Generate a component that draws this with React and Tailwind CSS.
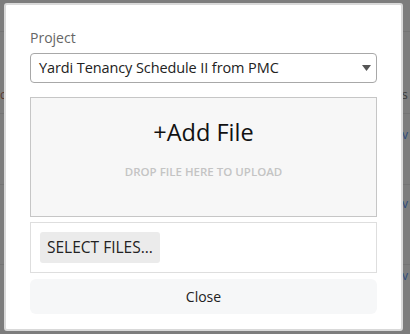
import React from 'react';

const App = () => {
  return (
    <div className="relative w-[410px] h-[334px] overflow-hidden bg-[#7d7d7d]" style={{ fontFamily: '"Open Sans", "Noto Sans", sans-serif' }}>
      {/* faded page behind the dialog */}
      <div className="flex flex-col">
        <div className="h-[32px] border-b border-[#747474]" />
        <div className="h-[82px] border-b border-[#747474] relative">
          <span className="absolute left-[0px] top-[54px] text-[12px] text-[#5a3a30]">c</span>
          <span className="absolute left-[402px] top-[54px] text-[12px] text-[#3a3a3a]">s</span>
        </div>
        <div className="h-[71px] border-b border-[#747474] relative">
          <span className="absolute left-[402px] top-[12px] text-[12px] text-[#2c4a7a]">v</span>
        </div>
        <div className="h-[80px] border-b border-[#747474] relative">
          <span className="absolute left-[402px] top-[10px] text-[12px] text-[#2c4a7a]">v</span>
        </div>
        <div className="h-[60px] relative">
          <span className="absolute left-[402px] top-[2px] text-[12px] text-[#2c4a7a]">v</span>
        </div>
      </div>

      {/* dialog */}
      <div className="absolute left-[4px] top-[3px] w-[399px] h-[328px] bg-white rounded-[3px] border-2 border-[#d9d9d9] px-[24px] pt-[23px]">
        <div className="text-[14px] text-[#666] leading-[20px]">Project</div>
        <div className="mt-[5px] h-[30px] border border-[#a8a8a8] rounded-[4px] flex items-center justify-between pl-[8px] pr-[5px]">
          <span className="text-[14.5px] text-[#222] tracking-[-0.1px]">Yardi Tenancy Schedule II from PMC</span>
          <svg width="9" height="6" viewBox="0 0 9 6"><path d="M0 0h9L4.5 6z" fill="#555" /></svg>
        </div>
        <div className="mt-[14px] h-[120px] border border-[#c6c6c6] bg-[#f7f7f7] flex flex-col items-center">
          <div className="mt-[18px] text-[23.5px] text-[#111] leading-[32px]">+Add File</div>
          <div className="mt-[16px] text-[11.5px] font-semibold text-[#c4c4c4] leading-[16px]">DROP FILE HERE TO UPLOAD</div>
        </div>
        <div className="mt-[5px] h-[51px] border border-[#dedede] flex items-center pl-[9px]">
          <div className="h-[31px] px-[7px] bg-[#ebebeb] rounded-[3px] flex items-center text-[15.5px] text-[#222]">SELECT FILES...</div>
        </div>
        <div className="mt-[6px] h-[35px] rounded-[6px] bg-[#f6f7f8] flex items-center justify-center text-[14px] text-[#222]">Close</div>
      </div>
    </div>
  );
};

export default App;
